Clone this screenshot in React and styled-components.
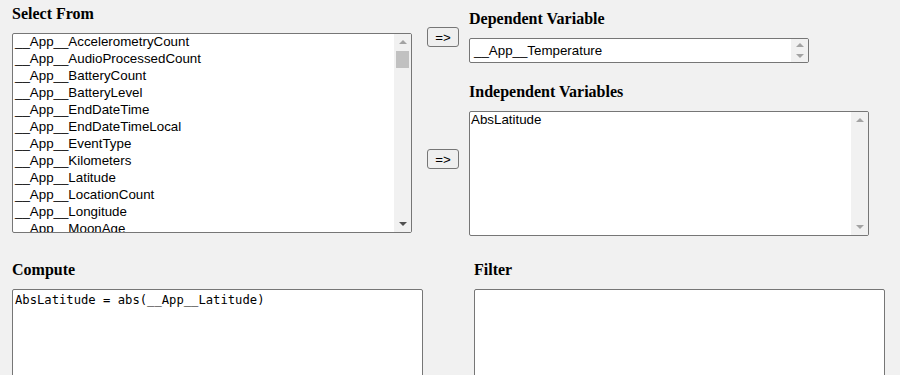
import styled, { createGlobalStyle } from 'styled-components';

const GlobalStyle = createGlobalStyle`
  html, body {
    margin: 0;
    padding: 0;
    background: #f1f1f1;
  }
  body {
    font-family: "Liberation Sans", Arial, sans-serif;
    color: #000;
  }
`;

const Page = styled.div`
  width: 900px;
  height: 375px;
  overflow: hidden;
  background: #f1f1f1;
`;

const Top = styled.div`
  display: flex;
  align-items: flex-start;
  padding-left: 12px;
`;

const Column = styled.div`
  display: flex;
  flex-direction: column;
  width: ${p => p.width}px;
  margin-left: ${p => p.offset || 0}px;
  padding-top: ${p => p.top || 0}px;
`;

const Heading = styled.h4`
  margin: 0 0 10px 0;
  font-family: "Liberation Serif", "Times New Roman", serif;
  font-weight: 700;
  font-size: 16px;
  line-height: 18px;
  margin-top: ${p => p.gap || 0}px;
`;

const MoveColumn = styled.div`
  display: flex;
  flex-direction: column;
  margin-left: 15px;
  padding-top: 27px;
  gap: 102px;
`;

const MoveButton = styled.button`
  width: 32px;
  height: 20px;
  padding: 0;
  background: #efefef;
  border: 1px solid #767676;
  border-radius: 3px;
  font-family: "Liberation Sans", Arial, sans-serif;
  font-size: 13.33px;
  color: #000;
`;

const ListBox = styled.div`
  box-sizing: border-box;
  display: flex;
  width: ${p => p.width}px;
  height: ${p => p.height}px;
  background: #fff;
  border: 1px solid #767676;
  border-radius: 2px;
  overflow: hidden;
`;

const Options = styled.div`
  flex: 1;
  overflow: hidden;
  padding-left: ${p => p.pad || 2}px;
  padding-top: ${p => p.padTop || 0}px;
  margin-top: ${p => p.shift || 0}px;
`;

const Option = styled.div`
  height: ${p => p.rowHeight || 17}px;
  line-height: ${p => p.rowHeight || 17}px;
  font-size: 13.33px;
  white-space: nowrap;
`;

const ScrollTrack = styled.div`
  width: 17px;
  background: #f1f1f1;
  display: flex;
  flex-direction: column;
`;

const ArrowCell = styled.div`
  height: ${p => p.size || 16}px;
  display: flex;
  align-items: center;
  justify-content: center;
`;

const Arrow = styled.div`
  width: 0;
  height: 0;
  border-left: 4px solid transparent;
  border-right: 4px solid transparent;
  ${p => p.down
    ? `border-top: 4px solid ${p.active ? '#505050' : '#a3a3a3'};`
    : `border-bottom: 4px solid ${p.active ? '#505050' : '#a3a3a3'};`}
`;

const ThumbArea = styled.div`
  flex: 1;
  padding: 1px 2px 0 2px;
`;

const Thumb = styled.div`
  height: 17px;
  background: #c1c1c1;
`;

const Bottom = styled.div`
  display: flex;
  padding-left: 12px;
  margin-top: 25px;
  gap: 51px;
`;

const CodeArea = styled.textarea`
  box-sizing: border-box;
  width: 411px;
  height: 160px;
  margin: 0;
  padding: 3px 2px;
  background: #fff;
  border: 1px solid #767676;
  border-radius: 2px;
  resize: none;
  font-family: "DejaVu Sans Mono", "Liberation Mono", monospace;
  font-size: 12.2px;
  line-height: 15px;
  color: #000;
`;

const fields = [
  '__App__AccelerometryCount',
  '__App__AudioProcessedCount',
  '__App__BatteryCount',
  '__App__BatteryLevel',
  '__App__EndDateTime',
  '__App__EndDateTimeLocal',
  '__App__EventType',
  '__App__Kilometers',
  '__App__Latitude',
  '__App__LocationCount',
  '__App__Longitude',
  '__App__MoonAge',
];

export default function App() {
  return (
    <Page>
      <GlobalStyle />
      <Top>
        <Column width={400} top={5}>
          <Heading>Select From</Heading>
          <ListBox width={400} height={200}>
            <Options shift={-1}>
              {fields.map(f => <Option key={f}>{f}</Option>)}
            </Options>
            <ScrollTrack>
              <ArrowCell><Arrow /></ArrowCell>
              <ThumbArea><Thumb /></ThumbArea>
              <ArrowCell><Arrow down active /></ArrowCell>
            </ScrollTrack>
          </ListBox>
        </Column>
        <MoveColumn>
          <MoveButton>=&gt;</MoveButton>
          <MoveButton>=&gt;</MoveButton>
        </MoveColumn>
        <Column width={400} offset={10} top={10}>
          <Heading>Dependent Variable</Heading>
          <ListBox width={340} height={25}>
            <Options pad={4} padTop={3}>
              <Option rowHeight={17}>__App__Temperature</Option>
            </Options>
            <ScrollTrack>
              <ArrowCell size={11}><Arrow /></ArrowCell>
              <ArrowCell size={11}><Arrow down /></ArrowCell>
            </ScrollTrack>
          </ListBox>
          <Heading gap={20}>Independent Variables</Heading>
          <ListBox width={400} height={125}>
            <Options pad={1}>
              <Option rowHeight={16}>AbsLatitude</Option>
            </Options>
            <ScrollTrack>
              <ArrowCell><Arrow /></ArrowCell>
              <ThumbArea />
              <ArrowCell><Arrow down /></ArrowCell>
            </ScrollTrack>
          </ListBox>
        </Column>
      </Top>
      <Bottom>
        <Column width={411}>
          <Heading>Compute</Heading>
          <CodeArea defaultValue="AbsLatitude = abs(__App__Latitude)" spellCheck={false} />
        </Column>
        <Column width={411}>
          <Heading>Filter</Heading>
          <CodeArea defaultValue="" spellCheck={false} />
        </Column>
      </Bottom>
    </Page>
  );
}
